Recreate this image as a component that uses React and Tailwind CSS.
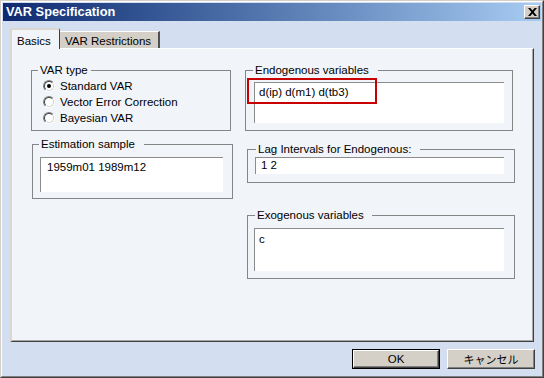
import React from 'react';

const font = { fontFamily: '"Liberation Sans", Arial, "Noto Sans CJK JP", sans-serif' };

const GroupBox = ({ label, labelLeft, labelPr, className, children }) => (
  <div className={`relative border border-[#858585] ${className}`}>
    <span
      className={`absolute -top-[7px] h-[12px] leading-[12px] bg-[#f1f4f9] pl-[2px] whitespace-nowrap ${labelLeft} ${labelPr}`}
    >
      {label}
    </span>
    {children}
  </div>
);

const Radio = ({ checked, label }) => (
  <div className="flex items-center h-[16px]">
    <div className="w-[12px] h-[12px] rounded-full border border-t-[#808080] border-l-[#808080] border-r-white border-b-white">
      <div className="w-full h-full rounded-full border border-t-[#404040] border-l-[#404040] border-r-[#d4d0c8] border-b-[#d4d0c8] bg-white flex items-center justify-center">
        {checked && <div className="w-[4px] h-[4px] rounded-full bg-black" />}
      </div>
    </div>
    <span className="ml-[5px] leading-[12px]">{label}</span>
  </div>
);

const Edit = ({ className, children }) => (
  <div className={`bg-white border-t border-l border-[#8c8c8c] leading-[12px] ${className}`}>{children}</div>
);

const Button = ({ isDefault, children }) => (
  <div className={`w-[88px] h-[20px] ${isDefault ? 'border border-black' : ''}`}>
    <div className="w-full h-full bg-[#d4d0c8] border border-t-white border-l-white border-r-[#404040] border-b-[#404040] flex items-center justify-center shadow-[inset_-1px_-1px_0_#808080]">
      <span className="leading-[12px]">{children}</span>
    </div>
  </div>
);

export default function App() {
  return (
    <div style={font} className="w-[544px] h-[378px] text-[11.5px] text-black select-none">
      {/* outer frame */}
      <div className="w-full h-full border border-t-[#d4d0c8] border-l-[#d4d0c8] border-r-[#404040] border-b-[#404040]">
        <div className="w-full h-full border border-t-white border-l-white border-r-[#808080] border-b-[#808080] bg-[#d3dff0] p-[1px] flex flex-col">
          {/* title bar */}
          <div className="h-[18px] bg-linear-to-r from-[#0f2a70] to-[#a8ccf2] flex items-center justify-between pl-[3px] pr-[1px]">
            <span className="text-white font-bold text-[12.8px] leading-[14px]">VAR Specification</span>
            <div className="w-[16px] h-[14px] bg-[#d4d0c8] border border-t-white border-l-white border-r-[#404040] border-b-[#404040] shadow-[inset_-1px_-1px_0_#808080] flex items-center justify-center">
              <svg width="9" height="8" viewBox="0 0 9 8">
                <path d="M0 0h2.4l2.1 2.6L6.6 0H9L5.7 4 9 8H6.6L4.5 5.4 2.4 8H0l3.3-4z" fill="#000" />
              </svg>
            </div>
          </div>

          {/* tabs */}
          <div className="flex items-end h-[20px] mt-[7px] ml-[7px]">
            <div className="relative z-10 w-[50px] h-[21px] -mb-[1px] bg-[#f1f4f9] border-t-2 border-l-2 border-t-[#dcd8d0] border-l-[#dcd8d0] border-r border-r-[#404040] pl-[5px] pt-[3px]">
              <span className="leading-[12px]">Basics</span>
            </div>
            <div className="w-[100px] h-[17px] bg-[#d4d0c8] border-t border-t-white border-r-2 border-r-[#505050] pl-[5px] pt-[1px]">
              <span className="leading-[12px]">VAR Restrictions</span>
            </div>
          </div>

          {/* tab panel */}
          <div className="mx-[7px] h-[294px] bg-[#f1f4f9] border-t border-t-white border-l-2 border-l-[#dcd8d0] border-r border-b border-r-[#404040] border-b-[#404040] shadow-[inset_-1px_-1px_0_#a8a8a8] flex">
            <div className="ml-[19px] mt-[21px] w-[202px] flex flex-col">
              <GroupBox label="VAR type" labelLeft="left-[6px]" labelPr="pr-[3px]" className="w-[200px] h-[61px]">
                <div className="pt-[7px] pl-[11px]">
                  <Radio checked label="Standard VAR" />
                  <Radio label="Vector Error Correction" />
                  <Radio label="Bayesian VAR" />
                </div>
              </GroupBox>
              <GroupBox label="Estimation sample" labelLeft="left-[6px]" labelPr="pr-[9px]" className="ml-[1px] mt-[13px] w-[201px] h-[55px]">
                <Edit className="ml-[7px] mt-[12px] w-[183px] h-[35px] pl-[6px] pt-[3px]">1959m01 1989m12</Edit>
              </GroupBox>
            </div>

            <div className="ml-[12px] mt-[21px] flex flex-col">
              <GroupBox label="Endogenous variables" labelLeft="left-[7px]" labelPr="pr-[9px]" className="w-[268px] h-[61px]">
                <Edit className="ml-[8px] mt-[11px] w-[250px] h-[41px] pl-[4px] pt-[3px]">d(ip) d(m1) d(tb3)</Edit>
                <div className="absolute left-[1px] top-[7px] w-[130px] h-[26px] border-2 border-[#c80000]" />
              </GroupBox>
              <GroupBox label="Lag Intervals for Endogenous:" labelLeft="left-[8px]" labelPr="pr-[9px]" className="ml-[2px] mt-[18px] w-[268px] h-[34px]">
                <Edit className="ml-[7px] mt-[7px] w-[249px] h-[17px] pl-[5px] pt-[1px]">1 2</Edit>
              </GroupBox>
              <GroupBox label="Exogenous variables" labelLeft="left-[7px]" labelPr="pr-[8px]" className="ml-[2px] mt-[32px] w-[268px] h-[64px]">
                <Edit className="ml-[6px] mt-[12px] w-[250px] h-[43px] pl-[4px] pt-[4px]">c</Edit>
              </GroupBox>
            </div>
          </div>

          {/* buttons */}
          <div className="flex justify-end gap-[7px] mt-[7px] mr-[6px]">
            <Button isDefault>OK</Button>
            <Button>
              <span className="text-[11px]" style={{ fontFamily: '"Noto Sans CJK JP", sans-serif' }}>キャンセル</span>
            </Button>
          </div>
        </div>
      </div>
    </div>
  );
}
